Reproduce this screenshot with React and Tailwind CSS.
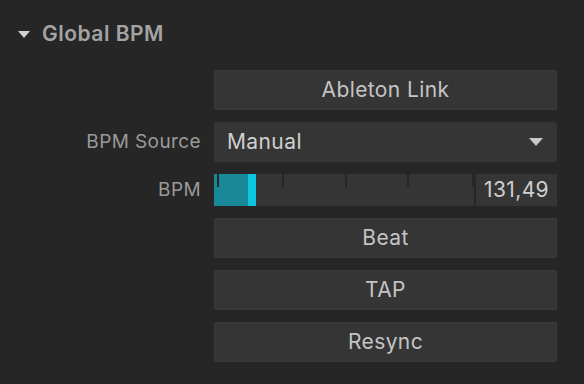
const ticks = [3, 68, 131, 193, 258];

const Button = ({ children }) => (
  <button className="h-[40px] w-full rounded-[2px] border border-[#3b3b3b] bg-[#353535] text-[21px] tracking-[0.4px] text-[#c4c4c4]">
    {children}
  </button>
);

const Row = ({ label, children }) => (
  <div className="flex items-center gap-[13px]">
    <div className="w-[201px] shrink-0 text-right text-[19px] tracking-[0.4px] text-[#9a9a9a]">{label}</div>
    <div className="w-[343px]">{children}</div>
  </div>
);

export default function App() {
  const bpm = 131.49;
  const fill = 34;

  return (
    <div
      className="h-[384px] w-[584px] bg-[#262626]"
      style={{ fontFamily: "Inter, 'Noto Sans', sans-serif" }}
    >
      {/* header */}
      <div className="flex items-center gap-[12px] pl-[18px] pt-[21px]">
        <svg width="12" height="7" viewBox="0 0 12 7">
          <path d="M0 0 H12 L6 7 Z" fill="#d0d0d0" />
        </svg>
        <span className="text-[21px] font-semibold leading-[26px] tracking-[0.5px] text-[#a3a3a3]">Global BPM</span>
      </div>

      <div className="mt-[23px] flex flex-col gap-[12px]">
        <Row label="">
          <Button>Ableton Link</Button>
        </Row>

        <Row label="BPM Source">
          <div className="flex h-[40px] items-center justify-between rounded-[2px] bg-[#353535] pl-[13px] pr-[14px] text-[21px] tracking-[0.4px] text-[#cfcfcf]">
            <span>Manual</span>
            <svg width="14" height="8" viewBox="0 0 14 8">
              <path d="M0 0 H14 L7 8 Z" fill="#c8c8c8" />
            </svg>
          </div>
        </Row>

        <Row label="BPM">
          <div className="flex h-[32px] gap-[2px]">
            <div className="relative h-full w-[260px] bg-[#353535]">
              <div className="absolute left-0 top-0 h-full bg-[#198898]" style={{ width: fill }} />
              <div className="absolute top-0 h-full w-[8px] bg-[#0cc6dd]" style={{ left: fill }} />
              {ticks.map((t) => (
                <div key={t} className="absolute top-0 h-[13px] w-[2px] bg-[#262626]" style={{ left: t }} />
              ))}
            </div>
            <div className="flex h-full flex-1 items-center justify-center bg-[#353535] text-[21px] tracking-[0.4px] text-[#cfcfcf]">
              {bpm.toFixed(2).replace(".", ",")}
            </div>
          </div>
        </Row>

        <Row label="">
          <Button>Beat</Button>
        </Row>
        <Row label="">
          <Button>TAP</Button>
        </Row>
        <Row label="">
          <Button>Resync</Button>
        </Row>
      </div>
    </div>
  );
}
